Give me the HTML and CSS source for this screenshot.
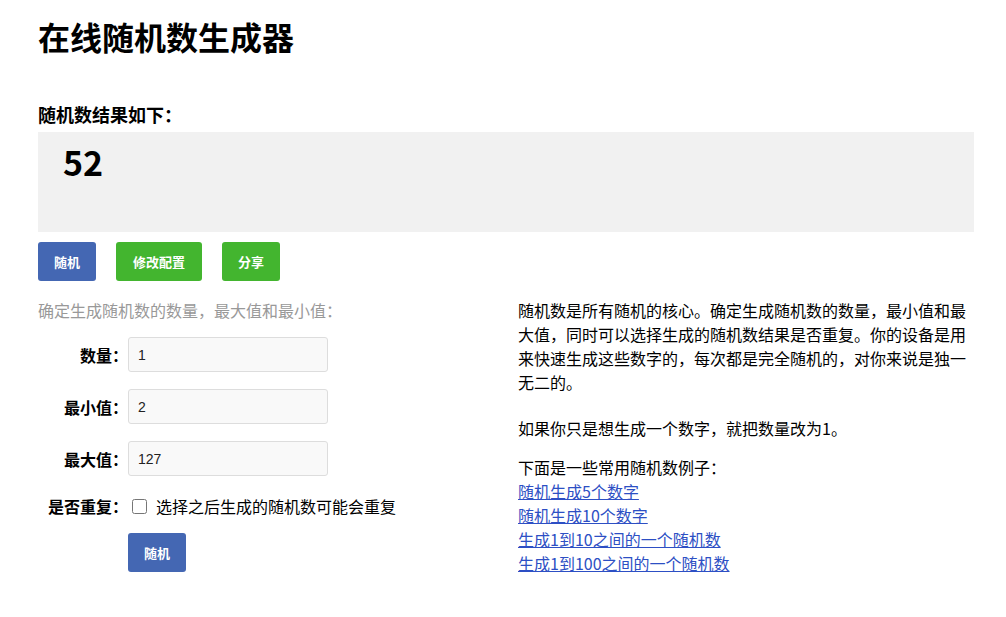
FILE: index.html
```html
<!DOCTYPE html>
<html lang="zh-CN">
<head>
  <meta charset="UTF-8">
  <meta name="viewport" content="width=device-width, initial-scale=1.0">
  <title>在线随机数生成器</title>
  <link rel="stylesheet" href="styles.css">
</head>
<body>

<div class="page">
  <h1>在线随机数生成器</h1>

  <h3 class="result-title">随机数结果如下：</h3>
  <div class="result"><span id="result-num">52</span></div>

  <div class="actions">
    <button class="btn btn-blue">随机</button>
    <button class="btn btn-green">修改配置</button>
    <button class="btn btn-green">分享</button>
  </div>

  <div class="main">
    <div class="form-col">
      <p class="hint">确定生成随机数的数量，最大值和最小值：</p>
      <div class="row">
        <label>数量：</label>
        <input type="text" value="1">
      </div>
      <div class="row">
        <label>最小值：</label>
        <input type="text" value="2">
      </div>
      <div class="row">
        <label>最大值：</label>
        <input type="text" value="127">
      </div>
      <div class="row row-check">
        <label>是否重复：</label>
        <span class="check"><input type="checkbox"> 选择之后生成的随机数可能会重复</span>
      </div>
      <div class="row row-btn">
        <span></span>
        <button class="btn btn-blue">随机</button>
      </div>
    </div>

    <div class="info-col">
      <p class="p1">随机数是所有随机的核心。确定生成随机数的数量，最小值和最大值，同时可以选择生成的随机数结果是否重复。你的设备是用来快速生成这些数字的，每次都是完全随机的，对你来说是独一无二的。</p>
      <p class="p2">如果你只是想生成一个数字，就把数量改为1。</p>
      <p class="p3">下面是一些常用随机数例子：</p>
      <a href="#">随机生成5个数字</a>
      <a href="#">随机生成10个数字</a>
      <a href="#">生成1到10之间的一个随机数</a>
      <a href="#">生成1到100之间的一个随机数</a>
    </div>
  </div>
</div>

</body>
</html>
```

FILE: styles.css
```css
body { margin: 0; background: #fff; color: #000; font-family: "Noto Sans CJK SC", "Noto Sans", sans-serif; }
.page { width: 936px; margin: 0 0 0 38px; padding-top: 16px; }
h1 { margin: 0; font-size: 32px; line-height: 40px; font-weight: bold; }
.result-title { margin: 46px 0 6px; font-size: 18px; line-height: 24px; font-weight: bold; }
.result { background: #f1f1f1; height: 100px; box-sizing: border-box; padding: 10px 25px; }
.result span { font-size: 34px; line-height: 40px; font-weight: bold; }
.actions { display: flex; gap: 20px; margin-top: 10px; }
.btn { height: 39px; padding: 0 16px; border: none; border-radius: 3px; color: #fff; font-family: "Noto Sans CJK SC", sans-serif; font-size: 13px; font-weight: bold; cursor: pointer; }
.btn-blue { background: #4467b3; }
.btn-green { background: #43b52f; min-width: 58px; }
.actions .btn-green:nth-child(2) { width: 86px; }
.main { display: flex; margin-top: 17px; }
.form-col { width: 468px; }
.info-col { width: 456px; padding-left: 12px; font-size: 16px; line-height: 24px; }
.hint { margin: 0 0 15px; color: #999; font-size: 16px; line-height: 24px; }
.row { display: grid; grid-template-columns: 90px 200px; align-items: center; margin-bottom: 17px; }
.row label { text-align: right; font-size: 16px; font-weight: bold; line-height: 24px; }
.row input[type="text"] { height: 35px; box-sizing: border-box; border: 1px solid #ddd; border-radius: 3px; background: #f9f9f9; padding: 0 9px; font-family: "Liberation Sans", Arial, sans-serif; font-size: 14px; color: #222; }
.row-check { grid-template-columns: 90px auto; height: 26px; margin-bottom: 14px; }
.check { display: flex; align-items: center; font-size: 16px; line-height: 24px; white-space: nowrap; }
.check input { width: 15px; height: 15px; margin: 0 9px 0 4px; }
.row-btn .btn { width: 58px; }
.info-col p { margin: 0; }
.info-col .p2 { margin-top: 22px; }
.info-col .p3 { margin-top: 15px; }
.info-col a { display: block; width: max-content; color: #2d4fc4; text-decoration: underline; }
```
